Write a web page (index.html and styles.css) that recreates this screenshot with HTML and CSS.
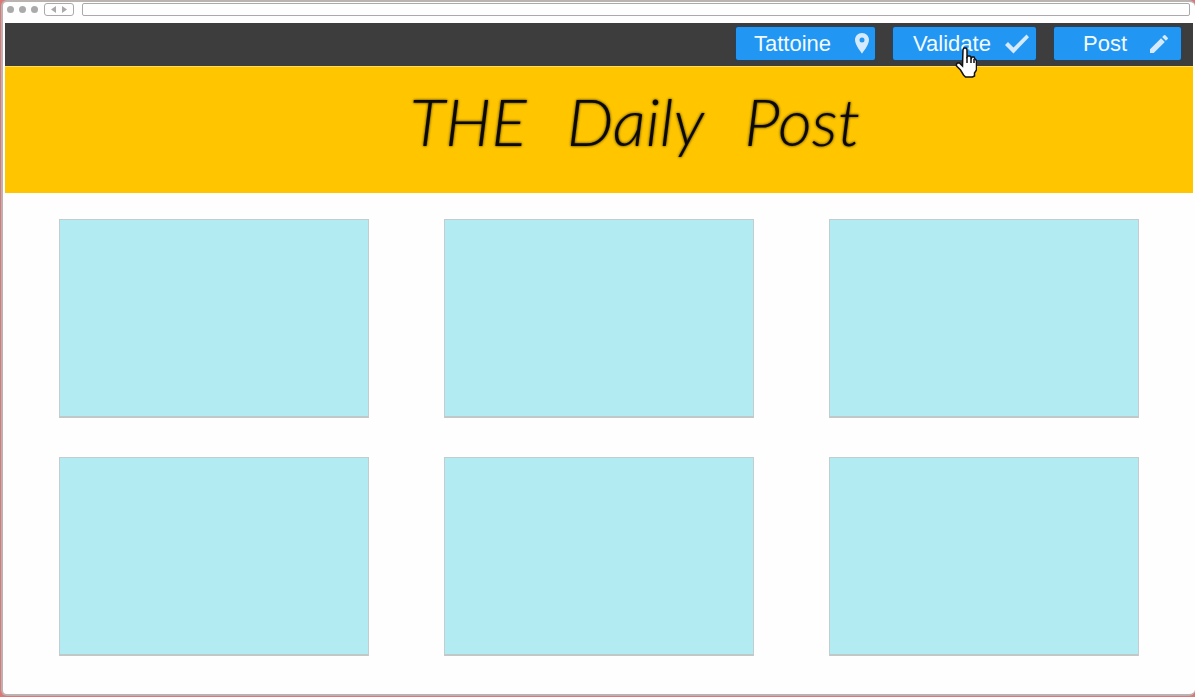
FILE: index.html
```html
<!DOCTYPE html>
<html lang="en">
<head>
  <meta charset="utf-8">
  <meta name="viewport" content="width=device-width, initial-scale=1">
  <title>THE Daily Post</title>
  <link rel="stylesheet" href="styles.css">
</head>
<body>
  <div class="window">
    <div class="chrome">
      <span class="dots"><i class="dot"></i><i class="dot"></i><i class="dot"></i></span>
      <div class="history">
        <button class="history-button" type="button" aria-label="Back"><svg width="5" height="7" viewBox="0 0 5 7"><path d="M5 0v7L0 3.5z"/></svg></button>
        <button class="history-button" type="button" aria-label="Forward"><svg width="5" height="7" viewBox="0 0 5 7"><path d="M0 0v7l5-3.5z"/></svg></button>
      </div>
      <input class="address" type="text" aria-label="Address">
    </div>
    <div class="page">
      <nav class="toolbar">
        <button class="action action-place" type="button">Tattoine
          <svg class="icon" viewBox="0 0 24 24"><path d="M12 1C8 1 5 4.200 5 8c0 5.200 7 13.500 7 13.500S19 13.200 19 8c0-3.800-3-7-7-7zm0 9.500a2.500 2.500 0 1 1 0-5 2.500 2.500 0 0 1 0 5z"/></svg>
        </button>
        <button class="action action-validate" type="button">Validate
          <svg class="icon" viewBox="0 0 24 24"><path d="M8.500 21.500 0 13l3-3 5.500 5.500L21.500 2.500 24 5.200z"/></svg>
          <svg class="pointer" width="22" height="31" viewBox="0 0 22 31"><path d="M8 2.500 9 1h2l1 1.500V10l1-1h2l1.500 2 .5-1h2l1 2 1 1 .5 1V23l-2 3v3l-2 1h-7l-2-2-3-5-4-4v-2l1-1h2l3 3z"/><path d="M12 10v6M16 11v5M19 12v4"/></svg>
        </button>
        <button class="action action-post" type="button">Post
          <svg class="icon" viewBox="0 0 24 24"><path d="M3 17.250V21h3.750L17.810 9.940l-3.750-3.750zM20.710 7.040a1 1 0 0 0 0-1.410l-2.340-2.340a1 1 0 0 0-1.410 0l-1.830 1.830 3.750 3.750z"/></svg>
        </button>
      </nav>
      <header class="masthead">
        <h1 class="title"><span>THE</span> <span>Daily</span> <span>Post</span></h1>
      </header>
      <main class="cards">
        <article class="card"></article>
        <article class="card"></article>
        <article class="card"></article>
        <article class="card"></article>
        <article class="card"></article>
        <article class="card"></article>
      </main>
    </div>
  </div>
</body>
</html>
```
FILE: styles.css
```css
* {
  box-sizing: border-box;
}

body {
  margin: 0;
  min-height: 100vh;
  display: flex;
  padding: 0 0 1px 1px;
  background: #dc7777;
  font-family: "Liberation Sans", Arial, sans-serif;
}

.window {
  flex: 1;
  display: flex;
  flex-direction: column;
  border: 2px solid #bbb2b2;
  border-right: 0;
  border-radius: 6px;
  background: #fefefe;
}

.chrome {
  display: flex;
  align-items: center;
  height: 21px;
  padding: 0 5px 6px 4px;
}

.dots {
  display: flex;
  gap: 5px;
  width: 37px;
}

.dot {
  width: 7px;
  height: 7px;
  border-radius: 50%;
  background: #aaa;
}

.history {
  display: flex;
  justify-content: center;
  gap: 6px;
  width: 30px;
  height: 13px;
  margin-right: 8px;
  border: 1px solid #aaa;
  border-radius: 3px;
}

.history-button {
  display: flex;
  align-items: center;
  padding: 0;
  border: 0;
  background: none;
  fill: #aaa;
}

.address {
  flex: 1;
  min-width: 0;
  height: 13px;
  padding: 0 4px;
  border: 1px solid #aaa;
  border-radius: 2px;
  background: #fefefe;
  font-size: 10px;
}

.page {
  margin: 0 2px;
}

.toolbar {
  display: flex;
  justify-content: flex-end;
  gap: 18px;
  padding: 4px 12px 6px;
  background: #3d3d3d;
}

.action {
  position: relative;
  display: flex;
  align-items: center;
  justify-content: space-between;
  height: 33px;
  border: 0;
  border-radius: 2px;
  background: #2196f3;
  box-shadow: 0 0 2px 1px #28435a;
  color: #f2faff;
  font: 22px "Liberation Sans", Arial, sans-serif;
}

.action-place {
  width: 139px;
  padding: 0 1px 0 18px;
}

.action-validate {
  width: 143px;
  padding: 0 7px 0 20px;
}

.action-post {
  width: 127px;
  padding: 0 10px 0 29px;
}

.icon {
  width: 24px;
  height: 24px;
  fill: #d5eafc;
}

.pointer {
  position: absolute;
  top: 20px;
  left: 62px;
  z-index: 1;
  fill: #fff;
  stroke: #111;
  stroke-width: 1.5;
}

.masthead {
  padding: 16px 0 34px 72px;
  border-top: 1px solid #ffdc62;
  background: #ffc600;
}

.title {
  display: flex;
  justify-content: center;
  gap: 40px;
  margin: 0;
  color: #0c0900;
  font: italic 300 66px/76px Lato, cursive;
  text-shadow: 0 0 3px #302500;
}

.cards {
  display: grid;
  grid-template-columns: repeat(3, 1fr);
  gap: 39px 75px;
  padding: 26px 54px 36px;
}

.card {
  height: 199px;
  border: 1px solid #c3cdcf;
  border-bottom: 2px solid #c2c7c8;
  background: #b2ebf2;
}
```
